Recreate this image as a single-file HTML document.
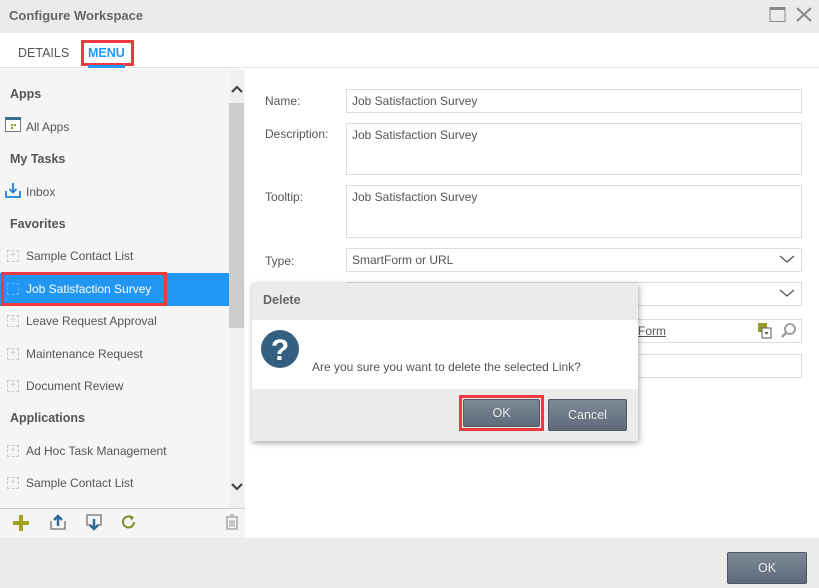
<!DOCTYPE html>
<html><head><style>
*{box-sizing:border-box;margin:0;padding:0}
body{width:819px;height:588px;overflow:hidden;background:#fff;font-family:"Liberation Sans",sans-serif;font-size:12px;color:#555;position:relative}
.abs{position:absolute}
.title{left:0;top:0;width:819px;height:33px;background:#ebebeb}
.title span{position:absolute;left:9px;top:8px;font-weight:bold;font-size:13px;color:#666}
.tabs{left:0;top:33px;width:819px;height:35px;background:#fff;border-bottom:1px solid #e4e4e4}
.left{left:0;top:69px;width:245px;height:469px;background:#f5f5f5}
.sb{left:229px;top:69px;width:15px;height:439px;background:#f0f0f0}
.thumb{left:229px;top:103px;width:15px;height:225px;background:#cdcdcd}
.hd{position:absolute;left:10px;font-weight:bold;color:#555;font-size:12.5px}
.it{position:absolute;left:26px;color:#555;font-size:12px}
.pl{position:absolute;left:7px;width:12px;height:12px;border:1px dashed #ccc;color:#ccc;font-size:10px;line-height:10px;text-align:center}
.tb{left:0;top:508px;width:245px;height:30px;border-top:1px solid #cfcfcf;background:#f5f5f5}
.foot{left:0;top:538px;width:819px;height:50px;background:#ebebeb}
.btn{position:absolute;background:linear-gradient(#7d8896,#5f6b7a);border:1px solid #4d5866;color:#e8e8e8;text-align:center;font-size:12.5px;border-radius:2px}
.lbl{position:absolute;left:265px;font-size:12px;color:#555}
.inp{position:absolute;left:346px;width:456px;border:1px solid #ddd;background:#fff;font-size:12px;color:#555;padding:4px 5px}
</style></head><body>
<div class="abs title"><span>Configure Workspace</span>
<svg class="abs" style="left:769px;top:6px" width="18" height="17"><rect x="1" y="1.5" width="15" height="14" fill="none" stroke="#888" stroke-width="1"/><rect x="1" y="1" width="15" height="3" fill="#888"/></svg>
<svg class="abs" style="left:795px;top:6px" width="18" height="17"><path d="M2 2L16 15M16 2L2 15" stroke="#888" stroke-width="2"/></svg>
</div>
<div class="abs tabs">
<span class="abs" style="left:18px;top:13px;font-size:12.5px;color:#555">DETAILS</span>
<span class="abs" style="left:81px;top:7px;width:53px;height:26px;border:3px solid #f0393f"></span>
<span class="abs" style="left:88px;top:13px;font-size:12.5px;color:#2196f3;font-weight:bold">MENU</span>
<span class="abs" style="left:88px;top:32px;width:37px;height:3px;background:#2196f3"></span>
</div>
<div class="abs left">
<div class="hd" style="top:18px">Apps</div>
<svg class="abs" style="left:5px;top:48px" width="16" height="16"><rect x="0.5" y="1.5" width="15" height="13" fill="#fff" stroke="#777"/><rect x="0" y="0" width="16" height="3" fill="#3b6b8c"/><rect x="6" y="7" width="2" height="2" fill="#8a9a2a"/><rect x="9" y="7" width="2" height="2" fill="#8a9a2a"/><rect x="6" y="10" width="2" height="2" fill="#8a9a2a"/></svg>
<div class="it" style="top:51px">All Apps</div>
<div class="hd" style="top:83px">My Tasks</div>
<svg class="abs" style="left:5px;top:113px" width="16" height="16"><path d="M1 9v6h14V9" fill="none" stroke="#1e7fd0" stroke-width="1.8"/><path d="M8 1v9M4.5 7L8 10.5 11.5 7" fill="none" stroke="#1e7fd0" stroke-width="1.8"/></svg>
<div class="it" style="top:116px">Inbox</div>
<div class="hd" style="top:148px">Favorites</div>
<div class="pl" style="top:181px">+</div><div class="it" style="top:180px">Sample Contact List</div>
<div class="abs" style="left:0;top:204px;width:229px;height:33px;background:#2196f3"></div>
<div class="abs" style="left:1px;top:203px;width:166px;height:34px;border:3px solid #f0393f"></div>
<div class="pl" style="top:214px;border-color:#5ab0f7"></div><div class="it" style="top:213px;color:#fff">Job Satisfaction Survey</div>
<div class="pl" style="top:246px">+</div><div class="it" style="top:245px">Leave Request Approval</div>
<div class="pl" style="top:279px">+</div><div class="it" style="top:278px">Maintenance Request</div>
<div class="pl" style="top:311px">+</div><div class="it" style="top:310px">Document Review</div>
<div class="hd" style="top:342px">Applications</div>
<div class="pl" style="top:376px">+</div><div class="it" style="top:375px">Ad Hoc Task Management</div>
<div class="pl" style="top:408px">+</div><div class="it" style="top:407px">Sample Contact List</div>
</div>
<div class="abs sb"></div><div class="abs thumb"></div>
<svg class="abs" style="left:230px;top:84px" width="14" height="10"><path d="M2 8L7 3 12 8" fill="none" stroke="#444" stroke-width="2.2"/></svg>
<svg class="abs" style="left:230px;top:482px" width="14" height="10"><path d="M2 2L7 7 12 2" fill="none" stroke="#444" stroke-width="2.2"/></svg>
<div class="abs tb">
<svg class="abs" style="left:12px;top:5px" width="18" height="18"><path d="M9 1v16M1 9h16" stroke="#a3a21f" stroke-width="4"/></svg>
<svg class="abs" style="left:49px;top:4px" width="18" height="18"><path d="M2 8v8h14V8" fill="none" stroke="#888" stroke-width="1.6"/><path d="M9 13V3M5 7l4-4 4 4" fill="none" stroke="#2a6a9a" stroke-width="2.4"/></svg>
<svg class="abs" style="left:85px;top:4px" width="18" height="18"><path d="M6 12H2V2h14v10h-4" fill="none" stroke="#888" stroke-width="1.6"/><path d="M9 6v10M5 12l4 4 4-4" fill="none" stroke="#2a6a9a" stroke-width="2.4"/></svg>
<svg class="abs" style="left:120px;top:4px" width="18" height="18"><path d="M14 9a5.5 5.5 0 1 1-2-4.3" fill="none" stroke="#7b8a2a" stroke-width="2"/><path d="M10 2l4 2.5-3 3" fill="#7b8a2a"/></svg>
<svg class="abs" style="left:224px;top:4px" width="16" height="18"><path d="M2 4h12M6 2h4" stroke="#aaa" stroke-width="1.6"/><path d="M3 5v11h10V5" fill="none" stroke="#aaa" stroke-width="1.6"/><path d="M6 7v7M8 7v7M10 7v7" stroke="#aaa" stroke-width="1.2"/></svg>
</div>
<div class="abs foot"></div>
<div class="btn" style="left:727px;top:552px;width:80px;height:32px;line-height:30px">OK</div>

<div class="lbl" style="top:94px">Name:</div>
<div class="inp" style="top:89px;height:24px">Job Satisfaction Survey</div>
<div class="lbl" style="top:127px">Description:</div>
<div class="inp" style="top:123px;height:52px">Job Satisfaction Survey</div>
<div class="lbl" style="top:190px">Tooltip:</div>
<div class="inp" style="top:185px;height:53px">Job Satisfaction Survey</div>
<div class="lbl" style="top:254px">Type:</div>
<div class="inp" style="top:248px;height:24px">SmartForm or URL</div>
<svg class="abs" style="left:779px;top:253px" width="16" height="12"><path d="M1 3l7 6 7-6" fill="none" stroke="#555" stroke-width="1.3"/></svg>
<div class="inp" style="top:282px;height:24px"></div>
<svg class="abs" style="left:779px;top:287px" width="16" height="12"><path d="M1 3l7 6 7-6" fill="none" stroke="#555" stroke-width="1.3"/></svg>
<div class="inp" style="top:319px;height:24px"></div>
<span class="abs" style="left:638px;top:324px;font-size:12px;color:#555;text-decoration:underline">Form</span>
<svg class="abs" style="left:757px;top:322px" width="16" height="18"><rect x="1" y="1" width="9" height="9" fill="#9a9a2a"/><rect x="5" y="6" width="9" height="10" fill="#fff" stroke="#555"/><path d="M7.5 10h4l-2 3z" fill="#555"/></svg>
<svg class="abs" style="left:780px;top:322px" width="18" height="18"><circle cx="10" cy="7" r="5" fill="none" stroke="#999" stroke-width="1.8"/><path d="M6.5 10.5L2 15" stroke="#999" stroke-width="2.5"/></svg>
<div class="inp" style="top:354px;height:24px"></div>

<div class="abs" style="left:252px;top:283px;width:386px;height:158px;background:#ebebeb;box-shadow:1px 2px 6px rgba(0,0,0,.35)">
<div class="abs" style="left:11px;top:10px;font-weight:bold;color:#666;font-size:12.5px">Delete</div>
<div class="abs" style="left:0;top:37px;width:386px;height:69px;background:#fff"></div>
<svg class="abs" style="left:9px;top:47px" width="38" height="38"><circle cx="19" cy="19" r="19" fill="#355f7f"/><text x="19" y="30" text-anchor="middle" font-family="Liberation Sans" font-weight="bold" font-size="30" fill="#fff">?</text></svg>
<div class="abs" style="left:60px;top:77px;font-size:12px;color:#555">Are you sure you want to delete the selected Link?</div>
<div class="abs" style="left:207px;top:112px;width:85px;height:36px;border:3px solid #f0393f"></div>
<div class="btn" style="left:211px;top:116px;width:77px;height:28px;line-height:26px">OK</div>
<div class="btn" style="left:296px;top:116px;width:79px;height:32px;line-height:30px">Cancel</div>
</div>
</body></html>
